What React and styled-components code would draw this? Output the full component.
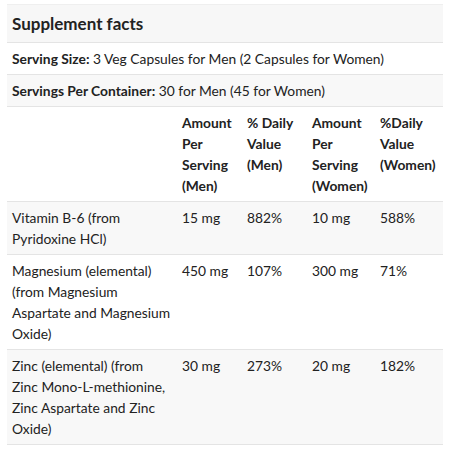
import React from "react";
import styled, { createGlobalStyle } from "styled-components";

const Global = createGlobalStyle`
  html, body { margin: 0; padding: 0; background: #fff; }
  body { font-family: Lato, "Open Sans", sans-serif; color: #222; }
`;

const Wrap = styled.section`
  padding: 4px 7px 0 7px;
  width: 436px;
`;

const Title = styled.h2`
  margin: 0;
  background: #f7f7f7;
  border-top: 1px solid #efefef;
  border-bottom: 1px solid #e4e4e4;
  height: 39px;
  box-sizing: border-box;
  padding: 7px 5px 0 5px;
  font-size: 17px;
  line-height: 24px;
  font-weight: 700;
  color: #222;
`;

const Table = styled.table`
  width: 436px;
  border-collapse: collapse;
  table-layout: fixed;
  font-size: 13.8px;
  line-height: 21px;
`;

const Row = styled.tr`
  background: ${(p) => (p.$shade ? "#f8f8f8" : "#fff")};
  border-bottom: 1px solid #e4e4e4;
`;

const Cell = styled.td`
  padding: 5px;
  vertical-align: top;
  font-weight: ${(p) => (p.$bold ? 700 : 400)};
  &:first-child { padding-right: 6px; }
`;

const Label = styled.strong`
  font-weight: 700;
`;

const rows = [
  ["Vitamin B-6 (from Pyridoxine HCl)", "15 mg", "882%", "10 mg", "588%"],
  [
    "Magnesium (elemental) (from Magnesium Aspartate and Magnesium Oxide)",
    "450 mg",
    "107%",
    "300 mg",
    "71%",
  ],
  [
    "Zinc (elemental) (from Zinc Mono-L-methionine, Zinc Aspartate and Zinc Oxide)",
    "30 mg",
    "273%",
    "20 mg",
    "182%",
  ],
];

export default function App() {
  return (
    <Wrap>
      <Global />
      <Title>Supplement facts</Title>
      <Table>
        <colgroup>
          <col style={{ width: 170 }} />
          <col style={{ width: 65 }} />
          <col style={{ width: 65 }} />
          <col style={{ width: 68 }} />
          <col style={{ width: 68 }} />
        </colgroup>
        <tbody>
          <Row>
            <Cell colSpan={5}>
              <Label>Serving Size:</Label> 3 Veg Capsules for Men (2 Capsules for Women)
            </Cell>
          </Row>
          <Row $shade>
            <Cell colSpan={5}>
              <Label>Servings Per Container:</Label> 30 for Men (45 for Women)
            </Cell>
          </Row>
          <Row>
            <Cell />
            <Cell $bold>Amount Per Serving (Men)</Cell>
            <Cell $bold>% Daily Value (Men)</Cell>
            <Cell $bold>Amount Per Serving (Women)</Cell>
            <Cell $bold>%Daily Value (Women)</Cell>
          </Row>
          {rows.map((r, i) => (
            <Row key={i} $shade={i % 2 === 0}>
              {r.map((c, j) => (
                <Cell key={j}>{c}</Cell>
              ))}
            </Row>
          ))}
        </tbody>
      </Table>
    </Wrap>
  );
}
